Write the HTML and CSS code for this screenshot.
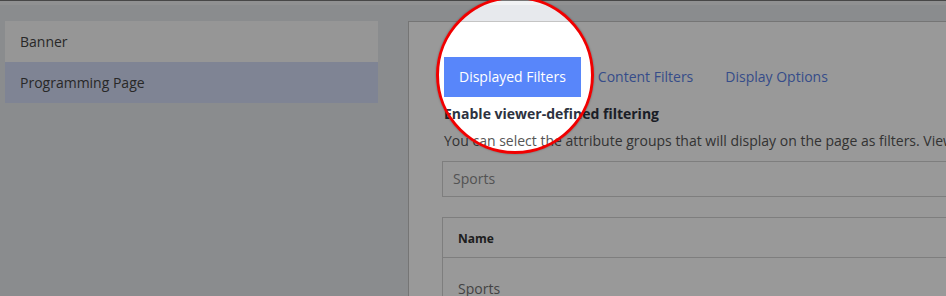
FILE: index.html
```html
<!DOCTYPE html>
<html lang="en">
<head>
<meta charset="utf-8">
<title>Programming Page - Displayed Filters</title>
<link rel="stylesheet" href="styles.css">
</head>
<body>
<div class="page">
  <div class="topband"></div>
  <div class="layout">
    <nav class="sidebar">
      <div class="side-item">Banner</div>
      <div class="side-item active">Programming Page</div>
    </nav>
    <main class="panel">
      <div class="tabs">
        <div class="tab active">Displayed Filters</div>
        <div class="tab">Content Filters</div>
        <div class="tab">Display Options</div>
      </div>
      <h2 class="heading">Enable viewer-defined filtering</h2>
      <p class="desc">You can select the attribute groups that will display on the page as filters. Viewers can then narrow the programming shown on the page.</p>
      <div class="field">Sports</div>
      <div class="table">
        <div class="thead">Name</div>
        <div class="trow">Sports</div>
      </div>
    </main>
  </div>
</div>
<div class="overlay"></div>
<div class="ring"></div>
</body>
</html>
```

FILE: styles.css
```css
html, body {
  margin: 0;
  padding: 0;
  width: 946px;
  height: 296px;
  overflow: hidden;
  background: #e7e9ed;
  font-family: "Open Sans", "Liberation Sans", sans-serif;
  font-size: 14px;
}

.page {
  border-top: 1px solid #777777;
  width: 1300px;
}

.topband {
  height: 4px;
  background: #f1f2f4;
}

.layout {
  display: grid;
  grid-template-columns: 373px 1fr;
  column-gap: 30px;
  padding: 16px 0 0 5px;
}

.sidebar {
  display: flex;
  flex-direction: column;
}

.side-item {
  height: 41px;
  line-height: 41px;
  padding: 0 15px;
  background: #fbfbfb;
  color: #444444;
}

.side-item.active {
  background: #d4dcf7;
}

.panel {
  background: #ffffff;
  border-top: 1px solid #c4c4c4;
  border-left: 1px solid #c4c4c4;
  padding: 35px 35px 40px 35px;
  height: 400px;
}

.tabs {
  display: flex;
}

.tab {
  height: 40px;
  line-height: 40px;
  padding: 0 15px;
  margin-right: 2px;
  color: #5a7fe6;
}

.tab.active {
  background: #5886fa;
  color: #ffffff;
}

.heading {
  margin: 6px 0 0 0;
  font-size: 14px;
  line-height: 21px;
  font-weight: 700;
  color: #2d3240;
}

.desc {
  margin: 6px 0 0 0;
  line-height: 21px;
  color: #555555;
  white-space: nowrap;
}

.field {
  margin: 10px 0 0 -2px;
  height: 34px;
  line-height: 34px;
  border: 1px solid #d2d2d2;
  padding: 0 10px;
  color: #8a8a8a;
}

.table {
  margin: 20px 0 0 -2px;
  border-top: 1px solid #d2d2d2;
  border-left: 1px solid #d2d2d2;
}

.thead {
  height: 39px;
  line-height: 41px;
  padding: 0 15px;
  font-size: 12px;
  font-weight: 700;
  color: #333333;
  border-bottom: 1px solid #d2d2d2;
}

.trow {
  padding: 20px 15px;
  line-height: 22px;
  color: #707070;
}

.overlay {
  position: fixed;
  inset: 0;
  background: radial-gradient(circle 78px at 515px 75px, rgba(0,0,0,0) 77px, rgba(0,0,0,0.4) 78px);
  pointer-events: none;
}

.ring {
  position: absolute;
  left: 436px;
  top: -4px;
  width: 158px;
  height: 158px;
  box-sizing: border-box;
  border: 3px solid #f00000;
  border-radius: 50%;
  box-shadow: 0 0 2px rgba(0,0,0,0.35);
  pointer-events: none;
}
```
